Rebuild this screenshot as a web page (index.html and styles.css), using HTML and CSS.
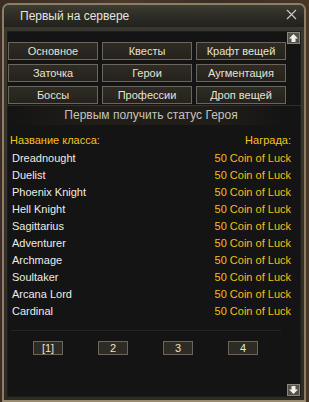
FILE: index.html
```html
<!DOCTYPE html>
<html>
<head>
<meta charset="utf-8">
<link rel="stylesheet" href="styles.css">
</head>
<body>
<div class="window">
  <div class="titlebar">
    <span class="title">Первый на сервере</span>
    <svg class="close" width="11" height="11" viewBox="0 0 11 11"><path d="M1 1 L10 10 M10 1 L1 10" stroke="#c9c8bf" stroke-width="1.2" fill="none"/></svg>
  </div>
  <div class="body">
    <div class="content">
      <div class="tabs">
        <div class="btn">Основное</div>
        <div class="btn">Квесты</div>
        <div class="btn">Крафт вещей</div>
        <div class="btn">Заточка</div>
        <div class="btn">Герои</div>
        <div class="btn">Аугментация</div>
        <div class="btn">Боссы</div>
        <div class="btn">Профессии</div>
        <div class="btn">Дроп вещей</div>
      </div>
      <div class="subtitle">Первым получить статус Героя</div>
      <div class="list">
        <div class="row head"><span>Название класса:</span><span>Награда:</span></div>
        <div class="row"><span>Dreadnought</span><span class="rw">50 Coin of Luck</span></div>
        <div class="row"><span>Duelist</span><span class="rw">50 Coin of Luck</span></div>
        <div class="row"><span>Phoenix Knight</span><span class="rw">50 Coin of Luck</span></div>
        <div class="row"><span>Hell Knight</span><span class="rw">50 Coin of Luck</span></div>
        <div class="row"><span>Sagittarius</span><span class="rw">50 Coin of Luck</span></div>
        <div class="row"><span>Adventurer</span><span class="rw">50 Coin of Luck</span></div>
        <div class="row"><span>Archmage</span><span class="rw">50 Coin of Luck</span></div>
        <div class="row"><span>Soultaker</span><span class="rw">50 Coin of Luck</span></div>
        <div class="row"><span>Arcana Lord</span><span class="rw">50 Coin of Luck</span></div>
        <div class="row"><span>Cardinal</span><span class="rw">50 Coin of Luck</span></div>
      </div>
      <div class="sep"></div>
      <div class="pages">
        <div class="pbtn">[1]</div>
        <div class="pbtn">2</div>
        <div class="pbtn">3</div>
        <div class="pbtn">4</div>
      </div>
      <div class="sbtn up">
        <svg width="11" height="10" viewBox="0 0 11 10"><path d="M5.5 1 L10 5.5 L7.5 5.5 L7.5 9 L3.5 9 L3.5 5.5 L1 5.5 Z" fill="#f2f0ea"/></svg>
      </div>
      <div class="sbtn down">
        <svg width="11" height="10" viewBox="0 0 11 10"><path d="M5.5 9 L10 4.5 L7.5 4.5 L7.5 1 L3.5 1 L3.5 4.5 L1 4.5 Z" fill="#f2f0ea"/></svg>
      </div>
    </div>
  </div>
</div>
</body>
</html>
```

FILE: styles.css
```css
html, body {
  margin: 0;
  padding: 0;
}
body {
  width: 309px;
  height: 402px;
  overflow: hidden;
  background: linear-gradient(90deg, #3a2c22, #4b3a2a 40%, #3a2e24 70%, #4a3526);
  font-family: "Liberation Sans", Arial, sans-serif;
  font-size: 11px;
}
.window {
  box-sizing: border-box;
  margin: 3px 3px 0 2px;
  width: 304px;
  height: 399px;
  border: 2px solid #8c7f66;
  border-bottom-color: #9a8c70;
  border-radius: 7px 7px 0 0;
  background: #36332b;
  display: flex;
  flex-direction: column;
}
.titlebar {
  height: 22px;
  flex: none;
  display: flex;
  align-items: center;
  justify-content: space-between;
  padding: 0 7px 0 16px;
  border-radius: 5px 5px 0 0;
  background: linear-gradient(180deg, #3e3d33 0%, #2e2d26 45%, #22221c 100%);
}
.title {
  color: #e4e4dc;
  font-size: 12px;
  margin-top: -1px;
}
.close {
  margin-top: -3px;
}
.body {
  flex: 1;
  padding: 4px 3px 3px 3px;
  background: linear-gradient(180deg, #3a372f, #2e2b25);
  display: flex;
}
.content {
  position: relative;
  flex: 1;
  background: #141414;
  box-shadow: inset 0 0 0 1px #1e1d1a;
  display: flex;
  flex-direction: column;
}
.tabs {
  margin: 11px 0 0 1px;
  display: grid;
  grid-template-columns: repeat(3, 90px);
  grid-auto-rows: 18px;
  column-gap: 4px;
  row-gap: 4px;
}
.btn {
  box-sizing: border-box;
  border: 1px solid #6c665a;
  background: linear-gradient(180deg, #2f2b24, #25221d);
  color: #e6e2d2;
  text-align: center;
  line-height: 16px;
  font-size: 11px;
}
.subtitle {
  margin-top: 1px;
  height: 20px;
  line-height: 20px;
  text-align: center;
  font-size: 12px;
  color: #c4c2ba;
  padding-right: 6px;
  background: linear-gradient(90deg, rgba(34,31,26,0) 0%, rgba(34,31,26,0.9) 30%, rgba(34,31,26,0.9) 70%, rgba(34,31,26,0) 95%);
  box-shadow: inset 0 1px 0 rgba(120,100,75,0.3);
}
.list {
  margin-top: 7px;
  display: flex;
  flex-direction: column;
  padding: 0 10px 0 5px;
}
.row {
  height: 17px;
  line-height: 17px;
  display: flex;
  justify-content: space-between;
  color: #ecebe6;
}
.row.head {
  height: 18px;
  line-height: 17px;
  margin-left: -2px;
  color: #f2c21a;
}
.rw {
  color: #f5bf0f;
}
.sep {
  margin: 10px 0 0 4px;
  width: 270px;
  height: 1px;
  background: #262523;
}
.pages {
  margin: 10px 0 0 26px;
  display: flex;
  gap: 35px;
}
.pbtn {
  box-sizing: border-box;
  width: 30px;
  height: 14px;
  border: 1px solid #6c665a;
  background: #2e2b24;
  color: #e8e4d2;
  text-align: center;
  line-height: 12px;
  font-size: 11px;
}
.sbtn {
  position: absolute;
  right: 1px;
  width: 13px;
  height: 12px;
  box-sizing: border-box;
  border: 1px solid #8a867b;
  background: #55524a;
  display: flex;
  align-items: center;
  justify-content: center;
}
.sbtn.up {
  top: 1px;
}
.sbtn.down {
  bottom: 1px;
}
```
